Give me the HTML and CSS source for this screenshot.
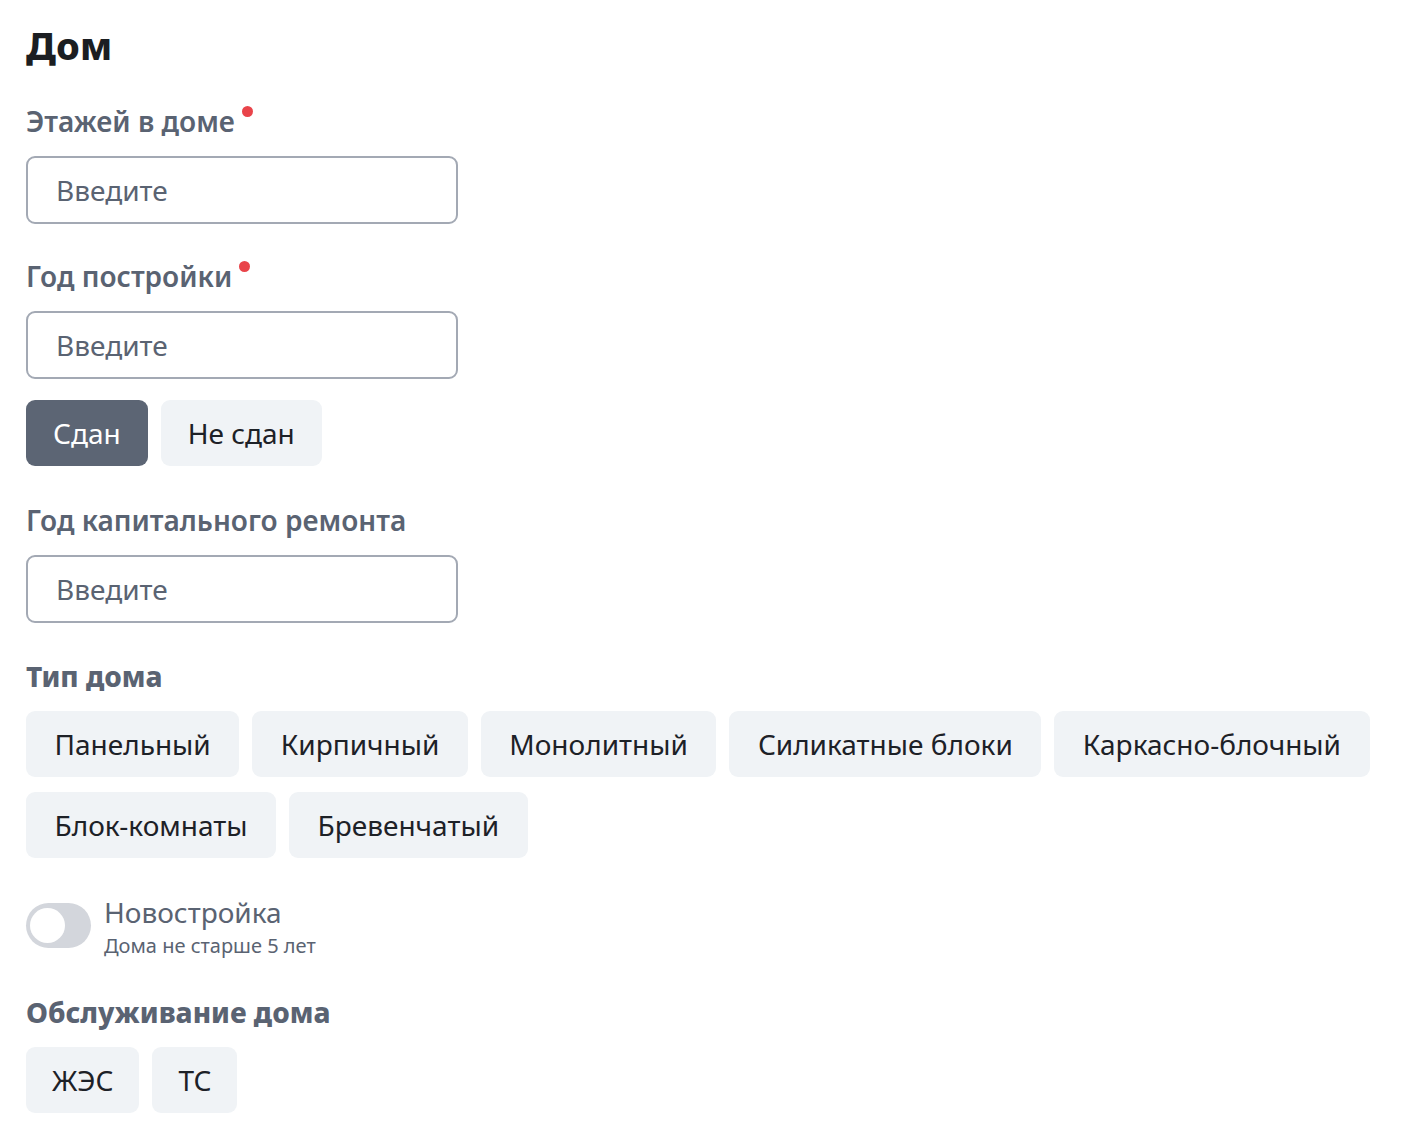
FILE: index.html
```html
<!DOCTYPE html>
<html lang="ru">
<head>
<meta charset="utf-8">
<link rel="stylesheet" href="styles.css">
</head>
<body>
<div class="page">
  <h1 class="title">Дом</h1>

  <div class="field">
    <div class="label"><span>Этажей в доме</span><span class="req"></span></div>
    <div class="input">Введите</div>
  </div>

  <div class="field">
    <div class="label"><span>Год постройки</span><span class="req"></span></div>
    <div class="input">Введите</div>
    <div class="chips chips-after">
      <div class="chip chip-active">Сдан</div>
      <div class="chip">Не сдан</div>
    </div>
  </div>

  <div class="field field-after-chips">
    <div class="label"><span>Год капитального ремонта</span></div>
    <div class="input">Введите</div>
  </div>

  <div class="field field-loose">
    <div class="label label-strong"><span>Тип дома</span></div>
    <div class="chips">
      <div class="chip">Панельный</div>
      <div class="chip">Кирпичный</div>
      <div class="chip">Монолитный</div>
      <div class="chip">Силикатные блоки</div>
      <div class="chip">Каркасно-блочный</div>
      <div class="chip">Блок-комнаты</div>
      <div class="chip">Бревенчатый</div>
    </div>
  </div>

  <div class="field toggle-row">
    <div class="toggle"><div class="knob"></div></div>
    <div class="toggle-text">
      <div class="toggle-title">Новостройка</div>
      <div class="toggle-sub">Дома не старше 5 лет</div>
    </div>
  </div>

  <div class="field field-after-toggle">
    <div class="label label-strong"><span>Обслуживание дома</span></div>
    <div class="chips chips-small">
      <div class="chip">ЖЭС</div>
      <div class="chip">ТС</div>
    </div>
  </div>
</div>
</body>
</html>
```

FILE: styles.css
```css
* { box-sizing: border-box; }
html, body { margin: 0; padding: 0; background: #ffffff; }
body {
  font-family: "Noto Sans", "Open Sans", "Liberation Sans", sans-serif;
  color: #1d2127;
}
.page {
  padding: 21px 26px 0 26px;
}
.title {
  margin: 0;
  font-size: 38px;
  line-height: 48px;
  font-weight: 800;
  color: #1b1e22;
  letter-spacing: 0.2px;
}
.field {
  margin-top: 34px;
}
.field-after-chips {
  margin-top: 36px;
}
.field-loose {
  margin-top: 35px;
}
.field-after-toggle {
  margin-top: 35px;
}
.label {
  display: flex;
  align-items: flex-start;
  font-size: 28px;
  line-height: 36px;
  font-weight: 600;
  color: #5a6372;
  margin-bottom: 17px;
}
.label-strong {
  font-weight: 800;
}
.req {
  width: 11px;
  height: 11px;
  border-radius: 50%;
  background: #e9444a;
  margin-left: 7px;
  margin-top: 3px;
}
.input {
  width: 432px;
  height: 68px;
  border: 2px solid #a3a9b4;
  border-radius: 9px;
  padding: 0 28px;
  display: flex;
  align-items: center;
  font-size: 28px;
  color: #5a6372;
}
.chips {
  display: flex;
  flex-wrap: wrap;
  column-gap: 13px;
  row-gap: 15px;
  max-width: 1360px;
}
.chips-after {
  margin-top: 21px;
}
.chip {
  height: 66px;
  padding: 0 28.5px;
  border-radius: 9px;
  background: #f0f3f6;
  display: flex;
  align-items: center;
  font-size: 28px;
  color: #1d2127;
}
.chip-active {
  background: #5c6574;
  color: #ffffff;
}
.chips-after .chip {
  padding: 0 27px;
}
.chips-small .chip {
  padding: 0 26px;
}
.toggle-row {
  display: flex;
  align-items: flex-start;
  gap: 13px;
  margin-top: 36px;
}
.toggle {
  margin-top: 9px;
  width: 65px;
  height: 45px;
  border-radius: 23px;
  background: #d3d6dc;
  padding: 5px 4px;
}
.knob {
  width: 35px;
  height: 35px;
  border-radius: 50%;
  background: #ffffff;
}
.toggle-title {
  font-size: 28px;
  line-height: 36px;
  color: #5a6372;
}
.toggle-sub {
  margin-top: 3px;
  font-size: 20px;
  line-height: 26px;
  color: #5a6372;
}
```
